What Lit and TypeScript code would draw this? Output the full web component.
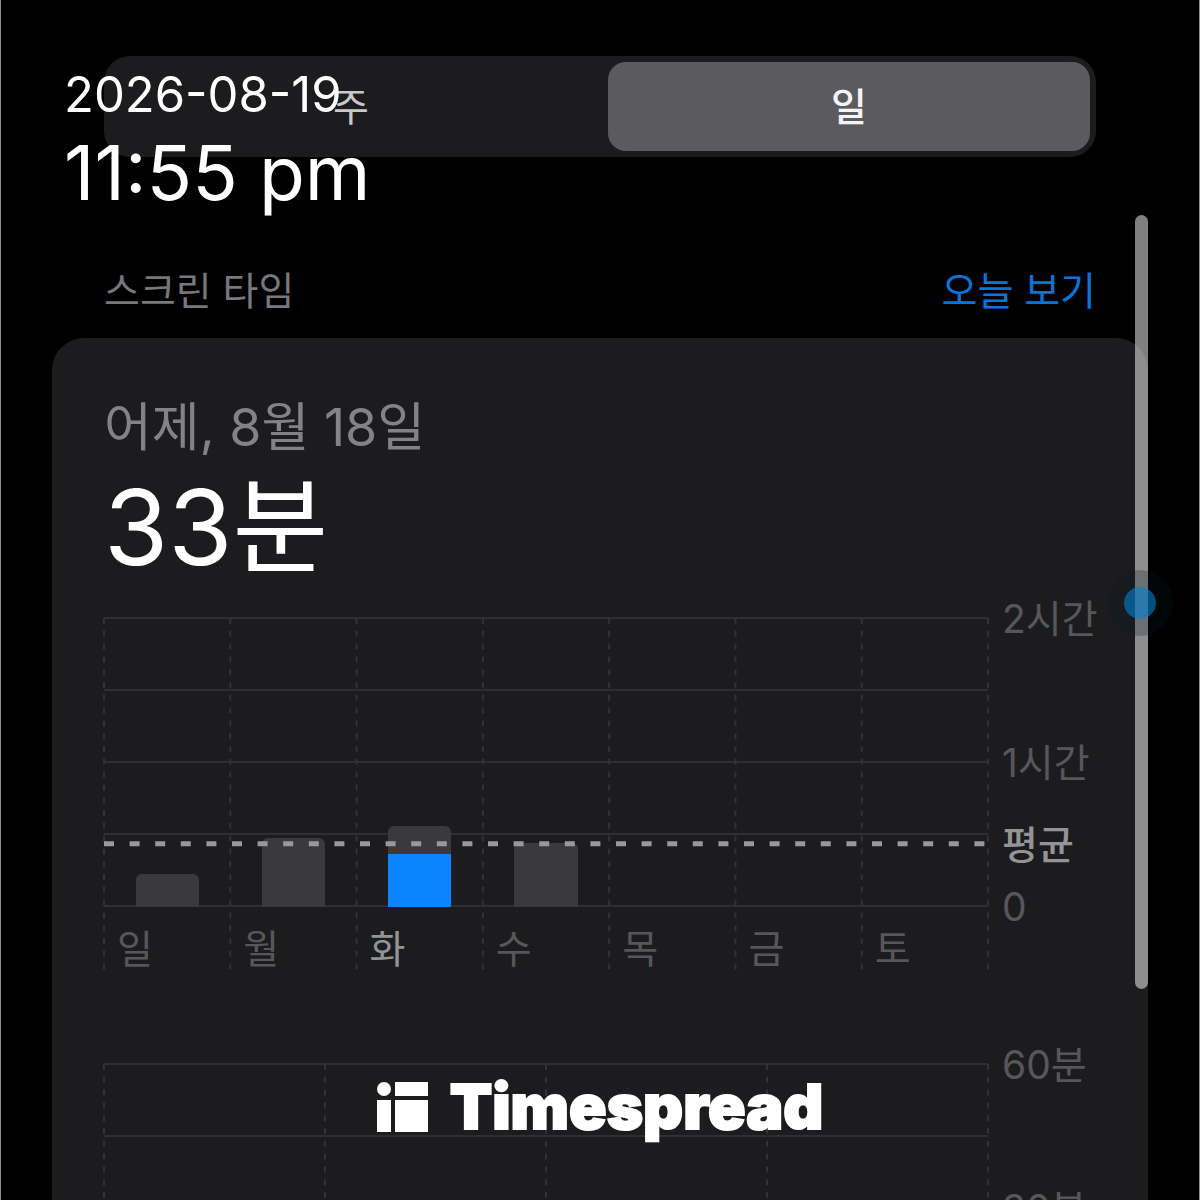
import { LitElement, html, svg, css, nothing } from "lit";
import { customElement, property, state } from "lit/decorators.js";

interface Bar {
  label: string;
  total: number;
  accent: number;
  selected?: boolean;
}

/** Heights are percentages of the two-hour scale. */
const WEEK: Bar[] = [
  { label: "일", total: 11.5, accent: 0 },
  { label: "월", total: 24, accent: 0 },
  { label: "화", total: 28, accent: 18.5, selected: true },
  { label: "수", total: 22, accent: 0 },
  { label: "목", total: 0, accent: 0 },
  { label: "금", total: 0, accent: 0 },
  { label: "토", total: 0, accent: 0 },
];

@customElement("usage-chart")
export class UsageChart extends LitElement {
  @property({ type: Number }) columns = 7;
  @property({ attribute: false }) bars: Bar[] = [];
  @property({ attribute: false }) ticks: string[] = [];
  @property({ type: Number }) average = 0;

  static styles = css`
    :host {
      display: grid;
      grid-template-columns: minmax(0, 1fr) 94px;
      column-gap: 14px;
      color: #57575b;
      font-size: 39px;
      line-height: 40px;
    }
    .plot {
      display: grid;
      grid-template-rows: 288px 64px;
    }
    .lines {
      grid-area: 1 / 1 / 3 / 2;
      width: 100%;
      height: 100%;
      overflow: visible;
    }
    .rule {
      stroke: #2f2f32;
      stroke-width: 2;
    }
    .divider {
      stroke: #323235;
      stroke-width: 2;
      stroke-dasharray: 6 6.8;
    }
    .bars,
    .days {
      display: grid;
      grid-auto-flow: column;
      grid-auto-columns: minmax(0, 1fr);
    }
    .bars {
      grid-area: 1 / 1;
      align-items: end;
      height: 289px;
    }
    .bar {
      display: flex;
      align-items: end;
      width: 50%;
      margin: 0 auto;
      border-radius: 6px 6px 0 0;
      background: #3a3a3c;
    }
    .accent {
      width: 100%;
      background: #0a84ff;
    }
    .average {
      grid-area: 1 / 1;
      width: 100%;
      height: 100%;
    }
    .average line {
      stroke: #98989d;
      stroke-width: 5;
      stroke-dasharray: 10 15.6;
    }
    .days {
      grid-area: 2 / 1;
      padding-top: 23px;
    }
    .day {
      padding-left: 13px;
    }
    .selected,
    .mean {
      color: #939398;
    }
    .axis {
      display: grid;
      grid-template-rows: 144px 82px 62px 40px;
      margin-top: -19px;
      white-space: nowrap;
    }
    .mean {
      font-weight: 500;
    }
  `;

  render() {
    const rows = [0, 72, 144, 216, 288];
    const dividers = Array.from({ length: this.columns + 1 }, (_, i) => `${(i * 100) / this.columns}%`);
    return html`
      <div class="plot">
        <svg class="lines" aria-hidden="true">
          ${rows.map((y) => svg`<line class="rule" x1="0" x2="100%" y1=${y} y2=${y}></line>`)}
          ${dividers.map((x) => svg`<line class="divider" x1=${x} x2=${x} y1="0" y2="100%"></line>`)}
        </svg>
        ${this.bars.length
          ? html`
              <div class="bars">
                ${this.bars.map(
                  (b) => html`
                    <div class="bar" style="height:${b.total}%">
                      ${b.accent
                        ? html`<div class="accent" style="height:${(b.accent / b.total) * 100}%"></div>`
                        : nothing}
                    </div>
                  `
                )}
              </div>
              <svg class="average" aria-hidden="true">
                <line x1="0" x2="100%" y1="${this.average}%" y2="${this.average}%"></line>
              </svg>
              <div class="days">
                ${this.bars.map((b) => html`<span class="day ${b.selected ? "selected" : ""}">${b.label}</span>`)}
              </div>
            `
          : nothing}
      </div>
      <div class="axis">
        ${this.ticks.map((t) => html`<span class=${t === "평균" ? "mean" : "tick"}>${t}</span>`)}
      </div>
    `;
  }
}

@customElement("app-root")
export class AppRoot extends LitElement {
  @state() private period = "일";

  static styles = css`
    :host {
      display: block;
      font-family: Inter, "Noto Sans CJK KR", sans-serif;
    }
    .screen {
      position: relative;
      box-sizing: border-box;
      height: 100vh;
      overflow: hidden;
      padding: 56px 51px 0;
      border: solid #8a8a8a;
      border-width: 0 1px;
      background: #000;
    }
    .segments {
      display: grid;
      grid-template-columns: 1fr 1fr;
      gap: 16px;
      margin: 0 52px;
      padding: 6px;
      border-radius: 26px;
      background: #1c1c1f;
    }
    .segment {
      height: 89px;
      padding: 0;
      border: 0;
      border-radius: 18px;
      background: transparent;
      color: #c8c8ca;
      font: inherit;
      font-size: 39px;
      line-height: 89px;
    }
    .segment.active {
      background: #5b5a5f;
      color: #f4f4f6;
      font-weight: 500;
    }
    .heading {
      display: flex;
      justify-content: space-between;
      margin: 110px 52px 23px;
      font-size: 39px;
      line-height: 48px;
    }
    .title {
      margin: 0;
      color: #77777c;
      font: inherit;
    }
    .today {
      color: #0a74da;
      text-decoration: none;
    }
    .card {
      padding: 58px 52px 0;
      border-radius: 32px 32px 0 0;
      background: #1c1c1e;
    }
    .date {
      color: #838288;
      font-size: 52px;
      line-height: 64px;
    }
    .total {
      margin: 4px 0 27px;
      color: #fff;
      font-size: 104px;
      line-height: 127px;
    }
    .hourly {
      margin-top: 94px;
    }
    .stamp {
      position: absolute;
      top: 63px;
      left: 63px;
      color: #fff;
      font-size: 49px;
      line-height: 64px;
    }
    .clock {
      display: block;
      font-size: 75px;
      line-height: 91px;
    }
    .scroll {
      position: absolute;
      top: 215px;
      right: 51px;
      width: 13px;
      height: 774px;
      border-radius: 7px;
      background: rgba(255, 255, 255, 0.5);
    }
    .touch {
      position: absolute;
      top: 570px;
      right: 26px;
      width: 32px;
      height: 32px;
      border: 17px solid rgba(3, 22, 36, 0.25);
      border-radius: 50%;
      background: rgba(3, 112, 184, 0.7);
      background-clip: padding-box;
    }
    .brand {
      position: absolute;
      top: 1070px;
      left: 0;
      right: 0;
      display: flex;
      justify-content: center;
      align-items: center;
      gap: 22px;
      color: #fff;
      font-size: 62px;
      font-weight: 900;
      line-height: 74px;
    }
    .mark {
      width: 51px;
      height: 50px;
      fill: currentColor;
    }
    .name {
      -webkit-text-stroke: 2px currentColor;
    }
  `;

  render() {
    return html`
      <main class="screen">
        <div class="segments">
          ${["주", "일"].map(
            (p) => html`
              <button
                type="button"
                class="segment ${this.period === p ? "active" : ""}"
                aria-pressed=${this.period === p}
                @click=${() => (this.period = p)}
              >${p}</button>
            `
          )}
        </div>
        <header class="heading">
          <h1 class="title">스크린 타임</h1>
          <a class="today" href="#today">오늘 보기</a>
        </header>
        <section class="card">
          <div class="date">어제, 8월 18일</div>
          <div class="total">33분</div>
          <usage-chart .columns=${7} .bars=${WEEK} .average=${78.4} .ticks=${["2시간", "1시간", "평균", "0"]}></usage-chart>
          <usage-chart class="hourly" .columns=${4} .ticks=${["60분", "30분"]}></usage-chart>
        </section>
        <time class="stamp" datetime="2026-08-19T23:55">2026-08-19<span class="clock">11:55 pm</span></time>
        <div class="scroll"></div>
        <div class="touch"></div>
        <div class="brand">
          <svg class="mark" viewBox="0 0 51 50" aria-hidden="true">
            <circle cx="7" cy="7" r="7"></circle>
            <path d="M18 0H51V14H18ZM0 18H14V50H0ZM18 18H51V50H18Z"></path>
          </svg>
          <span class="name">Timespread</span>
        </div>
      </main>
    `;
  }
}
